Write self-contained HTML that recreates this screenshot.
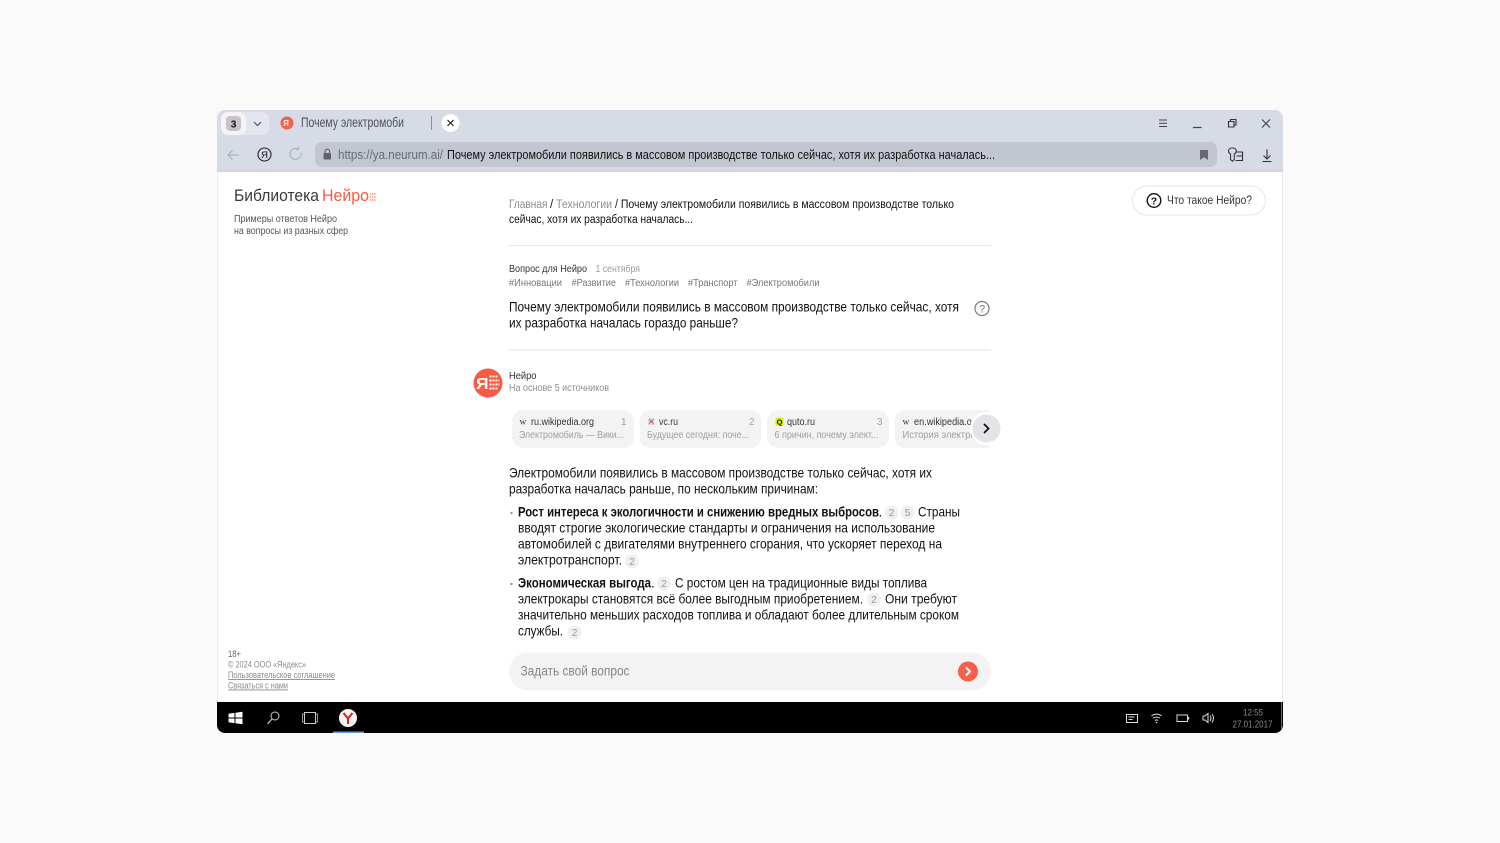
<!DOCTYPE html>
<html lang="ru"><head><meta charset="utf-8"><title>Почему электромобили</title>
<style>
html,body{margin:0;padding:0;background:#fafafa;width:1500px;height:843px;overflow:hidden}
svg{display:block;filter:blur(.3px)}
text{font-family:"Liberation Sans",sans-serif;fill:#111;white-space:pre}
.m{font-size:13.600px}.s{font-size:13px}.xs{font-size:9px}.t{font-size:10.500px}
.b{font-weight:bold}
.d{fill:#3a3a3a}
</style></head><body>
<svg width="1500" height="843" viewBox="0 0 1500 843" xmlns="http://www.w3.org/2000/svg">
<defs><clipPath id="w"><rect x="217" y="110" width="1066" height="623" rx="8"/></clipPath>
<clipPath id="c4"><rect x="890" y="408" width="100" height="42"/></clipPath></defs>
<g clip-path="url(#w)">
<rect x="217" y="110" width="1066" height="623" fill="#fff"/>
<rect x="217" y="110" width="1066" height="62" fill="#d6dbe6"/>
<rect x="217" y="169" width="1066" height="3" fill="#d0d5e0"/>
<rect x="1282" y="172" width="1" height="530" fill="#e8e8ea"/>
<rect x="217" y="172" width="1" height="530" fill="#eeeeef"/>
<!-- tabs -->
<rect x="221" y="112" width="48" height="23" rx="7" fill="#e3e6ee"/>
<rect x="221" y="112" width="25" height="23" rx="7" fill="#f4f4f6"/>
<rect x="226" y="116" width="15" height="15" rx="4" fill="#c9c3c7"/>
<text x="233.500" y="127.500" text-anchor="middle" class="t b">3</text>
<path d="M254 122l3.500 3.500 3.500-3.500" fill="none" stroke="#555" stroke-width="1.200"/>
<circle cx="287" cy="123" r="6.500" fill="#f4604c"/>
<text x="286" y="126" text-anchor="middle" font-size="8" style="fill:#fff" font-weight="bold">Я</text>
<text x="301" y="127" class="m" style="fill:#50525a" textLength="103" lengthAdjust="spacingAndGlyphs">Почему электромоби</text>
<rect x="431" y="116" width="1" height="14" fill="#8b8e96"/>
<circle cx="450.500" cy="123" r="9" fill="#fff"/>
<path d="M447.500 120l6 6M453.500 120l-6 6" stroke="#222" stroke-width="1.200"/>
<!-- window ctrl -->
<path d="M1159 120h8M1159 123.300h8M1159 126.500h8" stroke="#444" stroke-width="1"/>
<path d="M1193 127.500h8.500" stroke="#444" stroke-width="1.200"/>
<path d="M1228.500 121.500h5.500v5.500h-5.500zM1230.500 121.500v-2h5.500v5.500h-2" fill="none" stroke="#333" stroke-width="1.100"/>
<path d="M1262 119.500l8 8M1270 119.500l-8 8" stroke="#444" stroke-width="1.100"/>
<!-- nav -->
<path d="M239 155h-11M232.500 150.500l-4.500 4.500 4.500 4.500" fill="none" stroke="#aeb2bb" stroke-width="1.300"/>
<circle cx="264.500" cy="154.500" r="6.500" fill="none" stroke="#222" stroke-width="1.100"/>
<text x="264.500" y="158" text-anchor="middle" font-size="9.500">Я</text>
<path d="M301 153a5.500 5.500 0 1 1-2.500-3.800M298.500 146.500v3h-3" fill="none" stroke="#aeb2bb" stroke-width="1.200"/>
<rect x="315" y="142" width="902" height="25" rx="7" fill="#c1c6d0"/>
<rect x="323.500" y="153" width="7.500" height="6.500" rx="1" fill="#5f6269"/>
<path d="M325 153v-1.500a2.300 2.300 0 0 1 4.600 0V153" fill="none" stroke="#5f6269" stroke-width="1.100"/>
<text x="338" y="158.800" class="s" style="fill:#676a72" textLength="105" lengthAdjust="spacingAndGlyphs">https://ya.neurum.ai/</text>
<text x="447" y="158.800" class="s" textLength="548" lengthAdjust="spacingAndGlyphs">Почему электромобили появились в массовом производстве только сейчас, хотя их разработка началась...</text>
<path d="M1200 150h8v10l-4-2.800-4 2.800z" fill="#676a72"/>
<path d="M1232 148c-2.200 0-3.500 1.300-3.500 3 0 1.500.9 2.400 2 3v5.500l2 1.800 1.800-1.800V154c1.200-.6 2-1.500 2-3 0-1.700-1.400-3-3.300-3zM1236 152h6.500v8.500h-7M1236.500 156h6" fill="none" stroke="#333" stroke-width="1.100"/>
<path d="M1267 149.500v9M1263.500 155.500l3.500 3.500 3.500-3.500M1262.500 161.500h9" fill="none" stroke="#333" stroke-width="1.100"/>
<!-- sidebar -->
<text x="234" y="200.800" font-size="16.500" class="d" textLength="85" lengthAdjust="spacingAndGlyphs">Библиотека</text>
<text x="322" y="200.800" font-size="16.500" style="fill:#fa5a43" textLength="47" lengthAdjust="spacingAndGlyphs">Нейро</text>
<path d="M369.500 194h6M369.500 197h6M369.500 200h6" stroke="#fa7a66" stroke-width="1.200" stroke-dasharray="1.500 .8"/>
<text x="234" y="221.800" font-size="10" style="fill:#555" textLength="103" lengthAdjust="spacingAndGlyphs">Примеры ответов Нейро</text>
<text x="234" y="234" font-size="10" style="fill:#555" textLength="114" lengthAdjust="spacingAndGlyphs">на вопросы из разных сфер</text>
<text x="228" y="657" class="xs" style="fill:#666" textLength="13" lengthAdjust="spacingAndGlyphs">18+</text>
<text x="228" y="667.500" class="xs" style="fill:#8a8a8e" textLength="78" lengthAdjust="spacingAndGlyphs">© 2024 ООО «Яндекс»</text>
<text x="228" y="678" class="xs" style="fill:#8a8a8e;text-decoration:underline" textLength="107" lengthAdjust="spacingAndGlyphs">Пользовательское соглашение</text>
<text x="228" y="688.500" class="xs" style="fill:#8a8a8e;text-decoration:underline" textLength="60" lengthAdjust="spacingAndGlyphs">Связаться с нами</text>
<!-- breadcrumbs -->
<text x="509" y="208" style="fill:#8d8d91;font-size:11.500px" textLength="38.500" lengthAdjust="spacingAndGlyphs">Главная</text>
<text x="550" y="208" style="font-size:11.500px">/</text>
<text x="556" y="208" style="fill:#8d8d91;font-size:11.500px" textLength="56" lengthAdjust="spacingAndGlyphs">Технологии</text>
<text x="615" y="208" style="font-size:11.500px" textLength="339" lengthAdjust="spacingAndGlyphs">/ Почему электромобили появились в массовом производстве только</text>
<text x="509" y="223" style="font-size:11.500px" textLength="184" lengthAdjust="spacingAndGlyphs">сейчас, хотя их разработка началась...</text>
<rect x="509" y="245" width="482" height="1" fill="#e6e6e8"/>
<text x="509" y="272" style="font-size:10px;fill:#333" textLength="78" lengthAdjust="spacingAndGlyphs">Вопрос для Нейро</text>
<text x="595.500" y="272" style="font-size:10px;fill:#9a9a9e" textLength="44.500" lengthAdjust="spacingAndGlyphs">1 сентября</text>
<text x="509" y="286" style="font-size:10px;fill:#77777b" textLength="53" lengthAdjust="spacingAndGlyphs">#Инновации</text>
<text x="571.500" y="286" style="font-size:10px;fill:#77777b" textLength="44.500" lengthAdjust="spacingAndGlyphs">#Развитие</text>
<text x="625" y="286" style="font-size:10px;fill:#77777b" textLength="54" lengthAdjust="spacingAndGlyphs">#Технологии</text>
<text x="688" y="286" style="font-size:10px;fill:#77777b" textLength="49.500" lengthAdjust="spacingAndGlyphs">#Транспорт</text>
<text x="746.500" y="286" style="font-size:10px;fill:#77777b" textLength="73" lengthAdjust="spacingAndGlyphs">#Электромобили</text>
<text x="509" y="311.500" class="m" textLength="450" lengthAdjust="spacingAndGlyphs">Почему электромобили появились в массовом производстве только сейчас, хотя</text>
<text x="509" y="327.500" class="m" textLength="229" lengthAdjust="spacingAndGlyphs">их разработка началась гораздо раньше?</text>
<circle cx="982" cy="308.500" r="7" fill="none" stroke="#7a7a7e" stroke-width="1.200"/>
<text x="982" y="312.500" text-anchor="middle" font-size="11" style="fill:#7a7a7e">?</text>
<rect x="509" y="349.500" width="482" height="1" fill="#e6e6e8"/>
<!-- neuro -->
<circle cx="488" cy="383" r="14.500" fill="#fa5a43"/>
<text x="476" y="389" font-size="16" font-weight="bold" style="fill:#fff" textLength="12.500" lengthAdjust="spacingAndGlyphs">Я</text>
<path d="M489.500 376.500h8M489.500 380.500h10M489.500 384.500h10M489.500 388.500h8" stroke="#fff" stroke-width="2" stroke-dasharray="2 1"/>
<text x="509" y="379" style="font-size:10px;fill:#333" textLength="27.500" lengthAdjust="spacingAndGlyphs">Нейро</text>
<text x="509" y="391" style="font-size:10px;fill:#8e8e92" textLength="100" lengthAdjust="spacingAndGlyphs">На основе 5 источников</text>
<!-- cards -->
<rect x="512" y="410" width="122" height="38" rx="11" fill="#f3f3f4"/>
<rect x="639.500" y="410" width="122" height="38" rx="11" fill="#f3f3f4"/>
<rect x="767" y="410" width="122" height="38" rx="11" fill="#f3f3f4"/>
<g clip-path="url(#c4)"><rect x="894.500" y="410" width="122" height="38" rx="11" fill="#f3f3f4"/></g>
<text x="519.500" y="424.500" style="font-size:9.500px;fill:#333;font-family:'Liberation Serif',serif">w</text>
<text x="531" y="424.800" style="font-size:10px;fill:#333" textLength="63" lengthAdjust="spacingAndGlyphs">ru.wikipedia.org</text>
<text x="621" y="424.800" style="font-size:10px;fill:#a0a0a4">1</text>
<text x="519" y="438" style="font-size:10px;fill:#a0a0a4" textLength="105" lengthAdjust="spacingAndGlyphs">Электромобиль — Вики...</text>
<rect x="648" y="418" width="6.500" height="7" fill="#e4d6d9"/>
<path d="M649 419l4.500 5M653.500 419l-4.500 5M649.500 421.500h3.500" stroke="#9a6a74" stroke-width=".8"/>
<text x="659" y="424.800" style="font-size:10px;fill:#333" textLength="19" lengthAdjust="spacingAndGlyphs">vc.ru</text>
<text x="749" y="424.800" style="font-size:10px;fill:#a0a0a4">2</text>
<text x="647" y="438" style="font-size:10px;fill:#a0a0a4" textLength="102" lengthAdjust="spacingAndGlyphs">Будущее сегодня: поче...</text>
<rect x="775.500" y="417.500" width="8" height="8" rx="1.500" fill="#d9f000"/>
<text x="779.500" y="424.500" text-anchor="middle" style="font-size:7.500px;font-weight:bold">Q</text>
<text x="787" y="424.800" style="font-size:10px;fill:#333" textLength="28" lengthAdjust="spacingAndGlyphs">quto.ru</text>
<text x="877" y="424.800" style="font-size:10px;fill:#a0a0a4">3</text>
<text x="774.500" y="438" style="font-size:10px;fill:#a0a0a4" textLength="104" lengthAdjust="spacingAndGlyphs">6 причин, почему элект...</text>
<g clip-path="url(#c4)">
<text x="902.500" y="424.500" style="font-size:9.500px;fill:#333;font-family:'Liberation Serif',serif">w</text>
<text x="914" y="424.800" style="font-size:10px;fill:#333" textLength="66" lengthAdjust="spacingAndGlyphs">en.wikipedia.org</text>
<text x="902.500" y="438" style="font-size:10px;fill:#a0a0a4" textLength="90" lengthAdjust="spacingAndGlyphs">История электромоб</text>
</g>
<circle cx="987" cy="428.500" r="17" fill="#fff"/>
<circle cx="986.500" cy="428.500" r="14" fill="#e3e3e8"/>
<path d="M984 424l4.500 4.500-4.500 4.500" fill="none" stroke="#111" stroke-width="1.800"/>
<!-- answer -->
<text x="509" y="477.500" class="m" textLength="423" lengthAdjust="spacingAndGlyphs">Электромобили появились в массовом производстве только сейчас, хотя их</text>
<text x="509" y="493.500" class="m" textLength="309" lengthAdjust="spacingAndGlyphs">разработка началась раньше, по нескольким причинам:</text>
<circle cx="511.500" cy="513" r="1.200" fill="#999"/>
<text x="518" y="516.500" class="m b" textLength="361" lengthAdjust="spacingAndGlyphs">Рост интереса к экологичности и снижению вредных выбросов</text>
<text x="878.500" y="516.500" class="m">.</text>
<circle cx="891.500" cy="512.500" r="7" fill="#f0f0f1"/><text x="891.500" y="516" text-anchor="middle" style="font-size:10.500px;fill:#9a9a9e">2</text>
<circle cx="907.500" cy="512.500" r="7" fill="#f0f0f1"/><text x="907.500" y="516" text-anchor="middle" style="font-size:10.500px;fill:#9a9a9e">5</text>
<text x="918" y="516.500" class="m" textLength="42" lengthAdjust="spacingAndGlyphs">Страны</text>
<text x="518" y="532.500" class="m" textLength="417" lengthAdjust="spacingAndGlyphs">вводят строгие экологические стандарты и ограничения на использование</text>
<text x="518" y="548.500" class="m" textLength="424" lengthAdjust="spacingAndGlyphs">автомобилей с двигателями внутреннего сгорания, что ускоряет переход на</text>
<text x="518" y="564.500" class="m" textLength="104" lengthAdjust="spacingAndGlyphs">электротранспорт.</text>
<circle cx="632" cy="561.500" r="7" fill="#f0f0f1"/><text x="632" y="565" text-anchor="middle" style="font-size:10.500px;fill:#9a9a9e">2</text>
<circle cx="511.500" cy="584" r="1.200" fill="#999"/>
<text x="518" y="587.500" class="m b" textLength="133" lengthAdjust="spacingAndGlyphs">Экономическая выгода</text>
<text x="651" y="587.500" class="m">.</text>
<circle cx="664" cy="583.500" r="7" fill="#f0f0f1"/><text x="664" y="587" text-anchor="middle" style="font-size:10.500px;fill:#9a9a9e">2</text>
<text x="675" y="587.500" class="m" textLength="252" lengthAdjust="spacingAndGlyphs">С ростом цен на традиционные виды топлива</text>
<text x="518" y="603.500" class="m" textLength="345" lengthAdjust="spacingAndGlyphs">электрокары становятся всё более выгодным приобретением.</text>
<circle cx="874" cy="599.500" r="7" fill="#f0f0f1"/><text x="874" y="603" text-anchor="middle" style="font-size:10.500px;fill:#9a9a9e">2</text>
<text x="885" y="603.500" class="m" textLength="72" lengthAdjust="spacingAndGlyphs">Они требуют</text>
<text x="518" y="619.500" class="m" textLength="441" lengthAdjust="spacingAndGlyphs">значительно меньших расходов топлива и обладают более длительным сроком</text>
<text x="518" y="635.500" class="m" textLength="45" lengthAdjust="spacingAndGlyphs">службы.</text>
<circle cx="574.500" cy="632.500" r="7" fill="#f0f0f1"/><text x="574.500" y="636" text-anchor="middle" style="font-size:10.500px;fill:#9a9a9e">2</text>
<!-- input -->
<rect x="509" y="652.500" width="482" height="38" rx="19" fill="#f3f3f4"/>
<text x="520.500" y="675.500" class="m" style="fill:#85858a" textLength="109" lengthAdjust="spacingAndGlyphs">Задать свой вопрос</text>
<circle cx="968" cy="671.500" r="10" fill="#f4604c"/>
<path d="M966 667.500l4 4-4 4" fill="none" stroke="#fff" stroke-width="2"/>
<!-- what is -->
<rect x="1132.500" y="186" width="133" height="29" rx="14.500" fill="#fff" stroke="#e6e6e8"/>
<circle cx="1154" cy="200.500" r="6.800" fill="none" stroke="#111" stroke-width="1.400"/>
<text x="1154" y="204.500" text-anchor="middle" style="font-size:10.500px;font-weight:bold">?</text>
<text x="1167" y="204" style="font-size:12px;fill:#333" textLength="85" lengthAdjust="spacingAndGlyphs">Что такое Нейро?</text>
<!-- taskbar -->
<rect x="217" y="702" width="1066" height="31" fill="#000"/>
<path d="M228.500 713.800l6-.9v4.600h-6zM235.500 712.700l7-1v5.800h-7zM228.500 718.500h6v4.700l-6-.9zM235.500 718.500h7v5.800l-7-1z" fill="#fff"/>
<circle cx="275" cy="716" r="4" fill="none" stroke="#ccc" stroke-width="1"/>
<path d="M272 719l-4.500 5" stroke="#ccc" stroke-width="1.100"/>
<rect x="304.500" y="712.500" width="11" height="11" fill="none" stroke="#ccc" stroke-width="1"/>
<path d="M304 714h-1.500v8h1.500M316 714h1.500v8H316" fill="none" stroke="#999" stroke-width="1"/>
<circle cx="348" cy="718" r="9" fill="#f4f4f4"/>
<path d="M343.500 713l4.500 5.500 4.500-5.500M348 718.500v5.500" fill="none" stroke="#e02020" stroke-width="2"/>
<rect x="333" y="731.500" width="31" height="1.500" fill="#5a9fd8"/>
<rect x="1126.500" y="714.500" width="11" height="8" fill="none" stroke="#ddd" stroke-width="1"/>
<path d="M1128.500 717h6M1128.500 719.500h4" stroke="#ddd" stroke-width="1"/>
<path d="M1151.500 716a7.500 7.500 0 0 1 10 0M1153.200 718.300a5 5 0 0 1 6.600 0M1155 720.500a2.500 2.500 0 0 1 3 0" fill="none" stroke="#ddd" stroke-width="1"/>
<circle cx="1156.500" cy="722.500" r=".8" fill="#ddd"/>
<rect x="1177" y="715" width="10.500" height="6.500" fill="none" stroke="#ddd" stroke-width="1"/>
<rect x="1188" y="717" width="1.200" height="2.500" fill="#ddd"/>
<path d="M1203 716h2l3-2.500v9l-3-2.500h-2zM1210 715.500q2 2.500 0 5.500M1212 714q3 4 0 8.500" fill="none" stroke="#ddd" stroke-width="1"/>
<text x="1253" y="715.500" text-anchor="middle" style="font-size:9.500px;fill:#888" textLength="20" lengthAdjust="spacingAndGlyphs">12:55</text>
<text x="1252.500" y="727.500" text-anchor="middle" style="font-size:10px;fill:#888" textLength="40" lengthAdjust="spacingAndGlyphs">27.01.2017</text>
<rect x="1281" y="702" width="1" height="31" fill="#666"/>
</g>
</svg>
</body></html>
